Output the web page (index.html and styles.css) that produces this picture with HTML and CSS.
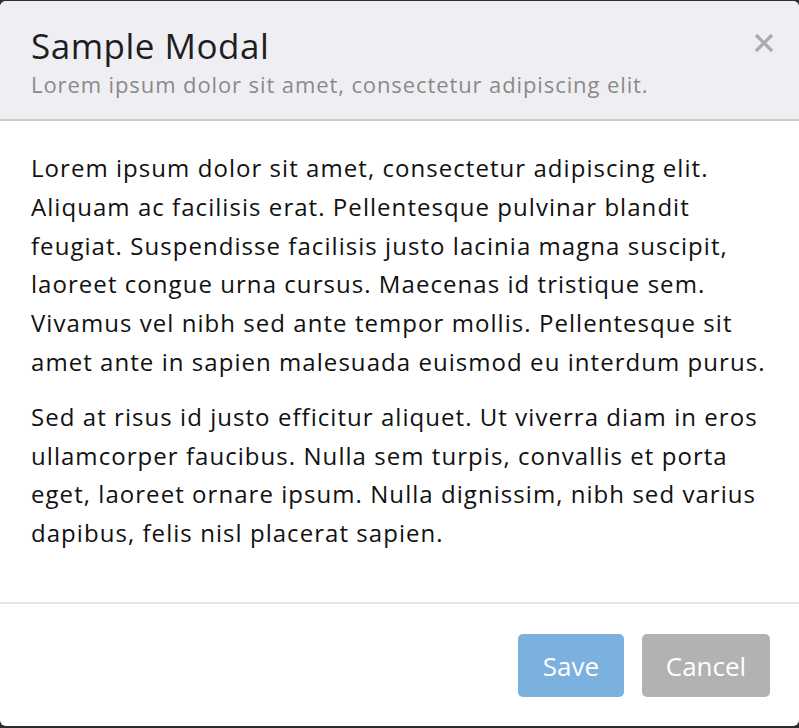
FILE: index.html
```html
<!DOCTYPE html>
<html>
<head>
<meta charset="utf-8">
<link rel="stylesheet" href="styles.css">
</head>
<body>
<div class="modal">
  <div class="modal-header">
    <div class="titles">
      <h1 class="title">Sample Modal</h1>
      <p class="subtitle">Lorem ipsum dolor sit amet, consectetur adipiscing elit.</p>
    </div>
    <button class="close" aria-label="Close">
      <svg width="20" height="20" viewBox="0 0 20 20"><path d="M2 2 L18 18 M18 2 L2 18" stroke="#ababab" stroke-width="3.2" stroke-linecap="butt"/></svg>
    </button>
  </div>
  <div class="modal-body">
    <p>Lorem ipsum dolor sit amet, consectetur adipiscing elit. Aliquam ac facilisis erat. Pellentesque pulvinar blandit feugiat. Suspendisse facilisis justo lacinia magna suscipit, laoreet congue urna cursus. Maecenas id tristique sem. Vivamus vel nibh sed ante tempor mollis. Pellentesque sit amet ante in sapien malesuada euismod eu interdum purus.</p>
    <p>Sed at risus id justo efficitur aliquet. Ut viverra diam in eros ullamcorper faucibus. Nulla sem turpis, convallis et porta eget, laoreet ornare ipsum. Nulla dignissim, nibh sed varius dapibus, felis nisl placerat sapien.</p>
  </div>
  <div class="modal-footer">
    <button class="btn btn-save">Save</button>
    <button class="btn btn-cancel">Cancel</button>
  </div>
</div>
</body>
</html>
```
FILE: styles.css
```css
html, body {
  margin: 0;
  padding: 0;
}
body {
  background: #2d2d2f;
  font-family: "Open Sans", "Noto Sans", sans-serif;
  padding-top: 1px;
  height: 728px;
  box-sizing: border-box;
}
.modal {
  background: #ffffff;
  border-radius: 6px;
  height: 725px;
  display: flex;
  flex-direction: column;
  overflow: hidden;
}
.modal-header {
  background: #efeff3;
  border-bottom: 2px solid #cdcdcf;
  box-sizing: border-box;
  padding: 23px 25px 0 31px;
  display: flex;
  justify-content: space-between;
  align-items: flex-start;
  flex-shrink: 0;
  height: 120px;
}
.title {
  margin: 0;
  font-size: 35px;
  font-weight: 400;
  line-height: 44px;
  letter-spacing: 0.5px;
  color: #1e1e1e;
}
.subtitle {
  margin: 0;
  font-size: 22px;
  line-height: 32px;
  letter-spacing: 0.9px;
  color: #8a8a8a;
}
.close {
  background: none;
  border: none;
  padding: 0;
  margin-top: 9px;
  width: 20px;
  height: 20px;
  cursor: pointer;
}
.close svg { display: block; }
.modal-body {
  padding: 28px 28px 0 31px;
  flex: 1;
}
.modal-body p {
  margin: 0 0 16px 0;
  font-size: 24px;
  line-height: 38.8px;
  letter-spacing: 1.05px;
  color: #111;
}
.modal-footer {
  border-top: 2px solid #e6e6e6;
  padding: 30px 29px 29px 0;
  display: flex;
  justify-content: flex-end;
  gap: 18px;
  flex-shrink: 0;
}
.btn {
  font-family: "Open Sans", "Noto Sans", sans-serif;
  font-size: 26px;
  color: #ffffff;
  border: none;
  border-radius: 5px;
  height: 63px;
  padding: 0;
  cursor: pointer;
}
.btn-save {
  background: #7cb0df;
  width: 106px;
}
.btn-cancel {
  background: #b2b2b2;
  width: 128px;
}
```
